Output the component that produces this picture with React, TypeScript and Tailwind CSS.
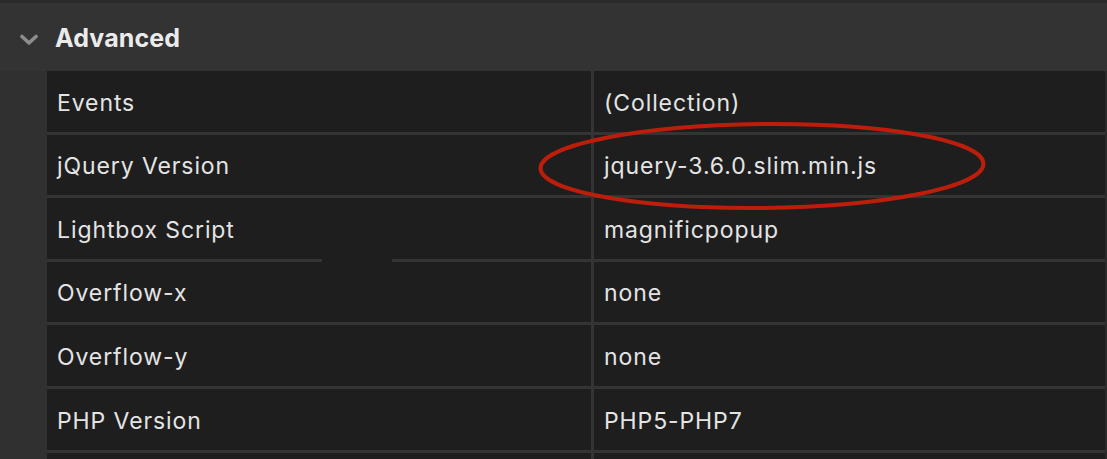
import React from "react";

const rows: { label: string; value: string }[] = [
  { label: "Events", value: "(Collection)" },
  { label: "jQuery Version", value: "jquery-3.6.0.slim.min.js" },
  { label: "Lightbox Script", value: "magnificpopup" },
  { label: "Overflow-x", value: "none" },
  { label: "Overflow-y", value: "none" },
  { label: "PHP Version", value: "PHP5-PHP7" },
  { label: "", value: "" },
];

function Separator({ gap }: { gap?: boolean }) {
  if (gap) {
    return (
      <div className="flex h-[3px] w-full">
        <div className="w-[275px] bg-[#343434]" />
        <div className="w-[70px] bg-[#1e1e1e]" />
        <div className="flex-1 bg-[#343434]" />
      </div>
    );
  }
  return <div className="h-[3px] w-full bg-[#343434]" />;
}

export default function App() {
  return (
    <div
      className="relative h-[459px] w-[1107px] overflow-hidden bg-[#303030] text-[#e4e4e4]"
      style={{ fontFamily: "Inter, 'Liberation Sans', sans-serif" }}
    >
      <div className="h-[3px] bg-[#2a2a2a]" />
      <div className="flex h-[68px] items-center bg-[#333333] pr-[2px] pt-[4px]">
        <svg width="18" height="12" viewBox="0 0 18 12" className="ml-[20px] mt-[1px]">
          <path d="M2 2.5 L9 9 L16 2.5" fill="none" stroke="#8d8d8d" strokeWidth="3.6" strokeLinecap="round" strokeLinejoin="round" />
        </svg>
        <span className="ml-[17px] text-[25px] font-bold tracking-[0.1px] text-[#ebebeb]">Advanced</span>
      </div>
      <div className="flex">
        <div className="w-[47px]" />
        <div className="flex flex-1 flex-col bg-[#1e1e1e]">
          {rows.map((r, i) => (
            <React.Fragment key={i}>
              <div className="flex h-[60.6px] pt-[3px] text-[23px] tracking-[0.9px]">
                <div className="flex w-[544px] items-center pl-[10px]">{r.label}</div>
                <div className="-mt-[3px] w-[3px] bg-[#343434]" />
                <div className="flex flex-1 items-center pl-[10px]">{r.value}</div>
              </div>
              <Separator gap={i === 2} />
            </React.Fragment>
          ))}
        </div>
        <div className="w-[2px] bg-[#2a2a2a]" />
      </div>
      <svg
        className="pointer-events-none absolute left-0 top-0"
        width="1107"
        height="459"
        viewBox="0 0 1107 459"
      >
        <ellipse cx="762" cy="166" rx="221.5" ry="42" fill="none" stroke="#bd1e0c" strokeWidth="4" transform="rotate(-0.6 762 166)" />
      </svg>
    </div>
  );
}
